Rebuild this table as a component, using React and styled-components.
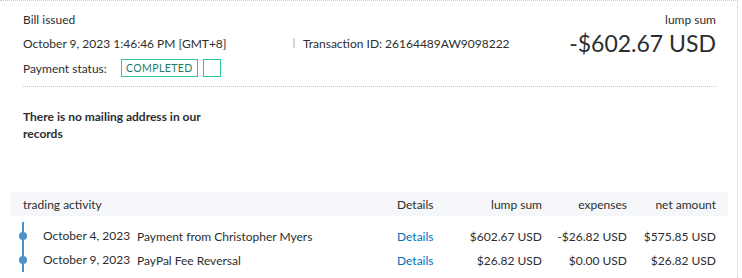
import React from 'react';
import styled, { createGlobalStyle } from 'styled-components';

const GlobalStyle = createGlobalStyle`
  body {
    margin: 0;
    background: #fff;
    font-family: Lato, "Open Sans", sans-serif;
    color: #2c2e2f;
  }
`;

const Card = styled.div`
  width: 738px;
  height: 278px;
  box-sizing: border-box;
  border-top: 1px dotted #c8c8c8;
  border-right: 1px dotted #c8c8c8;
  overflow: hidden;
  white-space: nowrap;
`;

const Summary = styled.section`
  padding: 8px 21px 0 23px;
`;

const Line = styled.div`
  display: flex;
  align-items: center;
  height: ${props => props.h || 20}px;
  font-size: 12px;
`;

const DateText = styled.span`
  width: 270px;
`;

const Divider = styled.span`
  width: 2px;
  height: 10px;
  background: #d4d4d4;
  margin-right: 8px;
`;

const Amount = styled.span`
  margin-left: auto;
  font-size: 23px;
  line-height: 24px;
`;

const Right = styled.span`
  margin-left: auto;
`;

const Badge = styled.span`
  display: inline-flex;
  align-items: center;
  justify-content: center;
  box-sizing: border-box;
  height: 18px;
  min-width: ${props => (props.empty ? '18px' : '77px')};
  margin-left: ${props => (props.empty ? '5px' : '14px')};
  border: 1px solid #2fc893;
  color: #1c7a66;
  font-size: 10.5px;
  letter-spacing: 0.4px;
`;

const Rule = styled.hr`
  border: none;
  border-top: 1px dotted #c8c8c8;
  margin: 7px 0 0 0;
`;

const Notice = styled.p`
  margin: 21px 0 0 0;
  width: 200px;
  white-space: normal;
  font-size: 12px;
  line-height: 17px;
  font-weight: 700;
`;

const Activity = styled.section`
  margin: 50px 9px 0 11px;
`;

const Grid = styled.div`
  display: grid;
  grid-template-columns: 374px 60px 85px 85px 89px;
  align-items: center;
  padding: 0 12px;
  font-size: 12px;
`;

const Head = styled(Grid)`
  height: 24px;
  background: #f5f7fa;
  margin-bottom: 8px;
`;

const Row = styled(Grid)`
  height: 24px;
`;

const Num = styled.span`
  text-align: right;
`;

const Event = styled.div`
  position: relative;
  display: flex;
  align-items: center;
  height: 100%;
  padding-left: 20px;

  &::before {
    content: '';
    position: absolute;
    left: -1px;
    top: ${props => (props.first ? '-2px' : '0')};
    bottom: 0;
    width: 2px;
    background: #4a92c9;
  }

  &::after {
    content: '';
    position: absolute;
    left: -4px;
    top: 50%;
    width: 8px;
    height: 8px;
    margin-top: -4px;
    border-radius: 50%;
    background: #4a92c9;
  }
`;

const EventDate = styled.span`
  width: 94px;
  margin-top: -2px;
`;

const Link = styled.a`
  color: #0070ba;
  text-decoration: none;
`;

const rows = [
  { date: 'October 4, 2023', desc: 'Payment from Christopher Myers', gross: '$602.67 USD', fee: '-$26.82 USD', net: '$575.85 USD' },
  { date: 'October 9, 2023', desc: 'PayPal Fee Reversal', gross: '$26.82 USD', fee: '$0.00 USD', net: '$26.82 USD' },
];

export default function App() {
  return (
    <>
      <GlobalStyle />
      <Card>
        <Summary>
          <Line>
            <span>Bill issued</span>
            <Right>lump sum</Right>
          </Line>
          <Line h={28}>
            <DateText>October 9, 2023 1:46:46 PM [GMT+8]</DateText>
            <Divider />
            <span>Transaction ID: 26164489AW9098222</span>
            <Amount>-$602.67 USD</Amount>
          </Line>
          <Line h={22}>
            <span>Payment status:</span>
            <Badge>COMPLETED</Badge>
            <Badge empty />
          </Line>
          <Rule />
          <Notice>There is no mailing address in our records</Notice>
        </Summary>
        <Activity>
          <Head>
            <span>trading activity</span>
            <span>Details</span>
            <Num>lump sum</Num>
            <Num>expenses</Num>
            <Num>net amount</Num>
          </Head>
          {rows.map((r, i) => (
            <Row key={i}>
              <Event first={i === 0}>
                <EventDate>{r.date}</EventDate>
                <span>{r.desc}</span>
              </Event>
              <Link href="#">Details</Link>
              <Num>{r.gross}</Num>
              <Num>{r.fee}</Num>
              <Num>{r.net}</Num>
            </Row>
          ))}
        </Activity>
      </Card>
    </>
  );
}
